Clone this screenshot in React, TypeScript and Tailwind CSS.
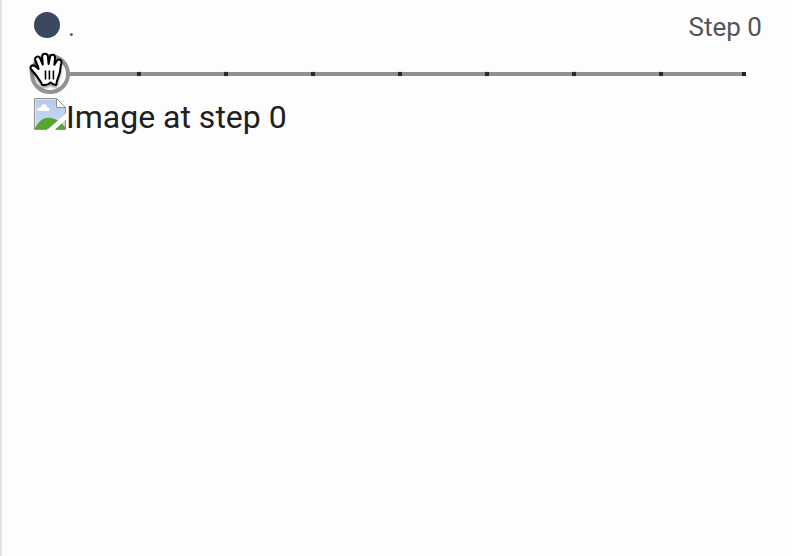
import React from "react";

const steps = [137, 224, 311, 398, 485, 572, 659];

function BrokenImage() {
  return (
    <svg width="32" height="32" viewBox="0 0 32 32" className="shrink-0">
      <defs>
        <linearGradient id="sky" x1="0" y1="0" x2="0" y2="1">
          <stop offset="0" stopColor="#b8caee" />
          <stop offset="1" stopColor="#c9daf2" />
        </linearGradient>
        <clipPath id="page">
          <path d="M1 1H22L31 10V31H1Z" />
        </clipPath>
      </defs>
      <path d="M.5 .5H22.5L31.5 9.5V31.5H.5Z" fill="#fdfdfd" />
      <path d="M1.5 1.5H22V10H31V31H1.5Z" fill="url(#sky)" />
      <path d="M4.5 13C2.3 12.5 2.5 9.8 5 9.8C5.6 8.8 6.6 8.8 7.2 9C7.6 5 12.8 5 13.2 9.4C16.2 9.5 16.3 13 14 13Z" fill="#fff" />
      <g clipPath="url(#page)">
        <path d="M1 30C5 23 9 19.8 14.5 19.8C21 19.8 27 24 31 29V32H1Z" fill="#55a532" />
      </g>
      <path d="M13 32L32 15.5V21.5L20.5 32Z" fill="#fdfdfd" />
      <path d="M.5 31.5V.5H22.5L31.5 9.5V15.5M.5 31.5H13M31.5 22V31.5H21.5" fill="none" stroke="#929292" />
      <path d="M22.5 .5V9.5H31.5Z" fill="#fdfdfd" stroke="#929292" />
    </svg>
  );
}

function HandCursor() {
  return (
    <svg width="40" height="42" viewBox="0 0 40 42" className="absolute left-[27px] top-0 drop-shadow-[0_2px_1px_rgba(0,0,0,0.4)]">
      <path
        d="M15 34.7C14.6 32 12 29.5 10 26.5C8.2 23.7 6.8 22.2 4.7 20C2 17.2 4.7 14.2 8 16L11.6 19C11 16 9.6 13.3 8.4 10.5C7 7 11.2 5 13 8.2L15.8 14.5L15.2 7C15 2.9 20.4 2.6 20.9 6.5L21.6 14L23 7C23.8 3.6 28.4 4.3 28 8L27.4 14.8L29.5 11.2C31.4 8.1 35.2 9.8 34.3 13.2C33.3 16.5 33.5 20 32.5 23.5C31.7 27 29.5 30 29.3 34.7C26.5 35.3 24.8 33.2 23.5 32.3C21.8 34.8 17.5 35.2 15 34.7Z"
        fill="white"
        stroke="black"
        strokeWidth="2"
        strokeLinejoin="round"
      />
      <path d="M18.5 20.5V29.5M22.4 20.5V29.5M26.4 20.5V29.5" stroke="black" strokeWidth="1.6" />
    </svg>
  );
}

export default function App() {
  return (
    <div className="h-[556px] w-[792px] overflow-hidden border-l-2 border-[#e2e2e2] bg-[#fdfdfd] font-[Roboto,sans-serif]">
      <header className="flex h-[50px] items-center justify-between pl-8 pr-[30px] text-[26px] leading-[30px] text-[#555]">
        <div className="flex items-center gap-2">
          <span className="size-[26px] rounded-full bg-[#3b475e]" />
          <span className="pt-1">.</span>
        </div>
        <span className="pt-1">Step 0</span>
      </header>
      <div className="relative -ml-0.5 h-12 pl-12 pt-[22px]">
        <div className="relative h-1 w-[698px] bg-[#909090]">
          {steps.map((x) => (
            <span
              key={x}
              className="absolute top-0 h-1 w-1 bg-[#2b2b2b] shadow-[0_0_1px_#555]"
              style={{ left: x - 48 }}
            />
          ))}
          <span className="absolute right-0 top-0 size-1 bg-[#222]" />
        </div>
        <span className="absolute left-[30px] top-1 size-10 rounded-full border-4 border-[#929292] bg-[#fdfdfd]" />
        <HandCursor />
      </div>
      <div className="flex pl-8">
        <BrokenImage />
        <span className="text-[32px] leading-[38px] text-[#202020]">Image at step 0</span>
      </div>
    </div>
  );
}
